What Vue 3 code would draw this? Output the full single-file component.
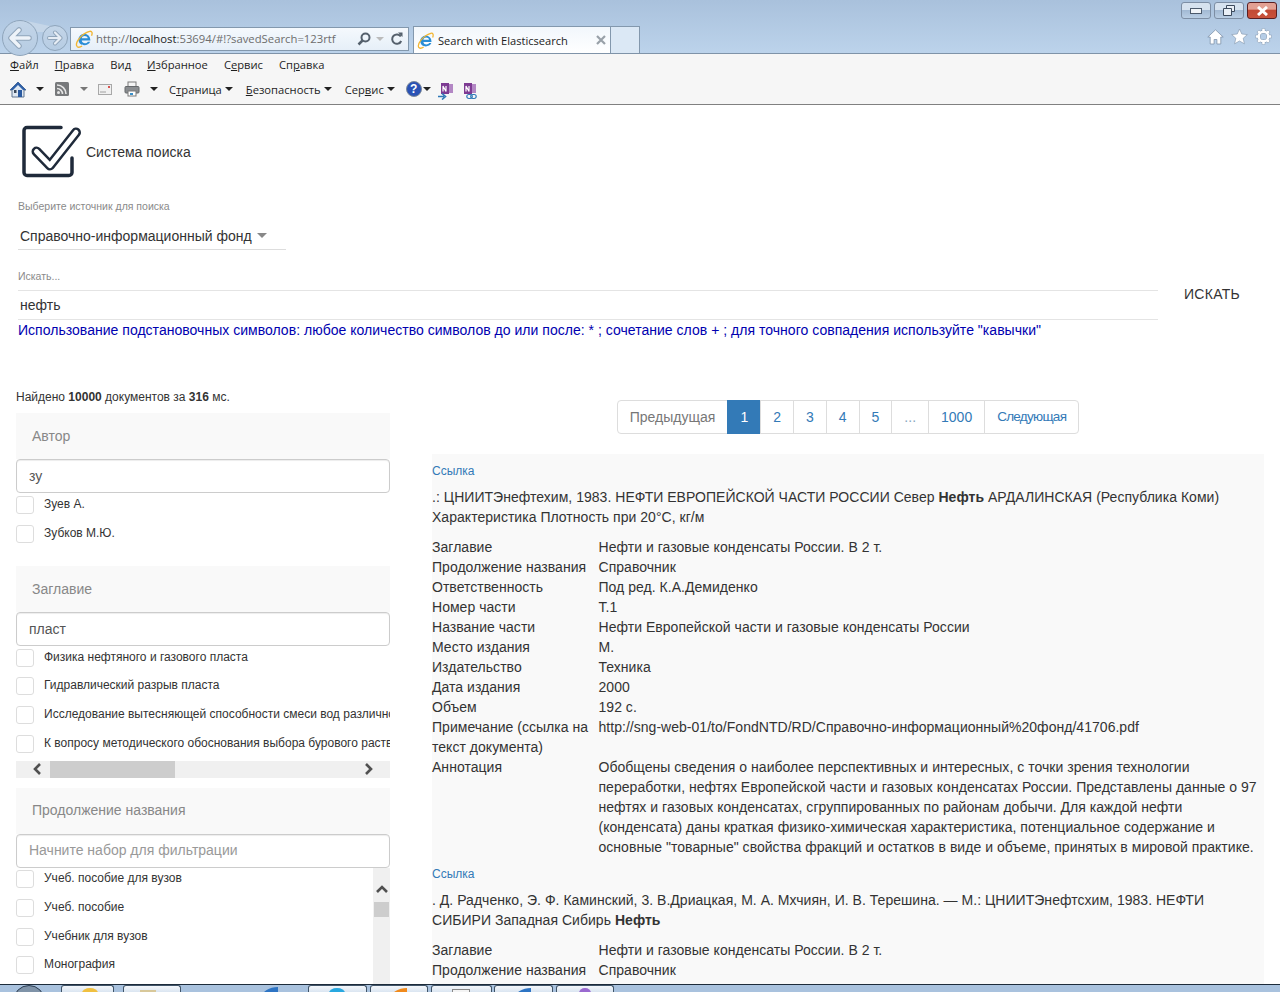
<template>
  <div class="screen">
    <svg class="defs" width="0" height="0">
      <defs>
        <symbol id="ie" viewBox="0 0 16 16">
          <path d="M3 8.7a5.3 5.3 0 1 1 10.600 0v.7H6c.3 2.800 4.200 3.100 5.400 1h2.100c-1.700 4.300-9.900 4.600-10.500-1.700zM6 7.300h5.300c-.2-2.700-5-2.700-5.300 0z" fill="#2b8ed6" fill-rule="evenodd"/>
          <path d="M1.800 14.600C-.5 11.500 6 3 13 1.200c2.300-.4 2.700 1.500 1.700 4M1.800 14.600c1 1 3 .6 4.500-.4" fill="none" stroke="#f2b632" stroke-width="1.200"/>
        </symbol>
        <symbol id="onenote" viewBox="0 0 14 14">
          <rect x="1" y="1" width="8" height="11" fill="#7d3a92"/>
          <rect x="9" y="2" width="4" height="9" fill="#b387c4"/>
          <path d="M3 9.500V4l3 5.500V4" fill="none" stroke="#fff" stroke-width="1.200"/>
        </symbol>
      </defs>
    </svg>

    <header class="chrome">
      <div class="caption">
        <div class="win-btn"><span class="win-min"></span></div>
        <div class="win-btn">
          <svg width="12" height="11" viewBox="0 0 12 11"><path d="M3.500 3V.5h8v6H9M.5 3.500h8v7h-8z" fill="#e9eff6" stroke="#3c4a5c"/></svg>
        </div>
        <div class="win-btn win-close">
          <svg width="13" height="10" viewBox="0 0 13 10"><path d="M2 1l9 8M11 1L2 9" stroke="#fff" stroke-width="3"/></svg>
        </div>
      </div>
      <div class="nav">
        <div class="round back">
          <svg width="24" height="22" viewBox="0 0 24 22">
            <path d="M11 3l-8 8 8 8M4 11h17" fill="none" stroke="#90a5ba" stroke-width="5.500" stroke-linejoin="round" stroke-linecap="round"/>
            <path d="M11 3l-8 8 8 8M4 11h17" fill="none" stroke="#eef3f9" stroke-width="3.500" stroke-linejoin="round" stroke-linecap="round"/>
          </svg>
        </div>
        <span class="tail"></span>
        <div class="round forward">
          <svg width="18" height="16" viewBox="0 0 18 16">
            <path d="M9 2.500L14.500 8 9 13.500M14 8H3" fill="none" stroke="#90a5ba" stroke-width="4" stroke-linejoin="round" stroke-linecap="round"/>
            <path d="M9 2.500L14.500 8 9 13.500M14 8H3" fill="none" stroke="#e6edf5" stroke-width="2.200" stroke-linejoin="round" stroke-linecap="round"/>
          </svg>
        </div>
        <div class="address">
          <svg class="ie-icon" width="18" height="18"><use href="#ie" /></svg>
          <span class="url"><span>http://</span><b>localhost</b><span>:53694/#!?savedSearch=123rtf</span></span>
          <svg class="addr-tool" width="14" height="14" viewBox="0 0 14 14"><circle cx="8.500" cy="5.500" r="4" fill="none" stroke="#55606c" stroke-width="2"/><path d="M5.500 8.500L1.500 12.500" stroke="#55606c" stroke-width="2.500"/></svg>
          <span class="arrow addr-arrow"></span>
          <svg class="addr-tool refresh" width="13" height="14" viewBox="0 0 13 14"><path d="M10.800 4.500A4.700 4.700 0 1 0 11.200 9" fill="none" stroke="#55606c" stroke-width="2"/><path d="M8 .5h4.500V5z" fill="#55606c"/></svg>
        </div>
        <div class="tab">
          <svg class="ie-icon" width="17" height="17"><use href="#ie" /></svg>
          <span class="tab-title">Search with Elasticsearch</span>
          <svg class="tab-close" width="10" height="10" viewBox="0 0 10 10"><path d="M1 1l8 8M9 1L1 9" stroke="#98a0a8" stroke-width="2.200"/></svg>
        </div>
        <div class="new-tab"></div>
        <div class="right-tools">
          <svg width="17" height="16" viewBox="0 0 17 16"><path d="M8.500.8L.8 8h2.400v7h3.900v-4.500h2.800V15h3.900V8h2.400z" fill="#fff" stroke="#7f93aa" stroke-width=".8"/></svg>
          <svg width="17" height="17" viewBox="0 0 17 16"><path d="M8.500.5l2.300 5 5.500.6-4.100 3.700 1.200 5.500-4.900-2.800-4.900 2.800 1.200-5.500L.7 6.100l5.500-.6z" fill="#fff" stroke="#7f93aa" stroke-width=".6"/></svg>
          <svg width="17" height="17" viewBox="0 0 16 16">
            <path d="M8 .5v3M8 12.500v3M.5 8h3M12.500 8h3M2.700 2.700l2.100 2.100M11.200 11.200l2.100 2.100M2.700 13.300l2.100-2.100M11.200 4.800l2.100-2.100" stroke="#7f93aa" stroke-width="3.200"/>
            <circle cx="8" cy="8" r="4.500" fill="none" stroke="#7f93aa" stroke-width="3.200"/>
            <circle cx="8" cy="8" r="4.500" fill="none" stroke="#fff" stroke-width="2.400"/>
            <path d="M8 .8v3M8 12.200v3M.8 8h3M12.200 8h3M2.900 2.900l2 2M11.100 11.100l2 2M2.900 13.100l2-2M11.100 4.900l2-2" stroke="#fff" stroke-width="2.400"/>
          </svg>
        </div>
      </div>
    </header>

    <div class="menus">
      <nav class="menubar">
        <span v-for="m in menu" :key="m[0] + m[1] + m[2]">{{ m[0] }}<u>{{ m[1] }}</u>{{ m[2] }}</span>
      </nav>
      <div class="toolbar">
        <svg class="t-home" width="18" height="17" viewBox="0 0 18 17">
          <path d="M9 1L1 9h2v7h12V9h2z" fill="#dfe8f2" stroke="#5f7590"/>
          <path d="M9 1L1 9h3l5-5 5 5h3z" fill="#2d5fa8"/>
          <rect x="9" y="9" width="4" height="7" fill="#2a5aa0"/>
          <rect x="5" y="9" width="2.500" height="3" fill="#3c4a5c"/>
        </svg>
        <span class="arrow dark a-home"></span>
        <svg class="t-rss" width="14" height="14" viewBox="0 0 14 14">
          <rect width="14" height="14" rx="1.500" fill="#77797b"/>
          <circle cx="3.500" cy="10.500" r="1.500" fill="#e6e6e6"/>
          <path d="M2 6.500a5.500 5.500 0 0 1 5.500 5.500M2 3a9 9 0 0 1 9 9" fill="none" stroke="#e6e6e6" stroke-width="1.600"/>
        </svg>
        <span class="arrow gray a-rss"></span>
        <svg class="t-mail" width="14" height="11" viewBox="0 0 14 11">
          <rect x=".5" y=".5" width="13" height="10" fill="#f0f0f0" stroke="#a8a8a8"/>
          <path d="M2 8h6" stroke="#a0a0a0"/>
          <rect x="10" y="2" width="2" height="2" fill="#d9534f"/>
        </svg>
        <svg class="t-print" width="16" height="16" viewBox="0 0 16 16">
          <rect x="4" y="1" width="8" height="5" fill="#f4f4f4" stroke="#7a7a7a"/>
          <rect x="1" y="5.500" width="14" height="6.500" rx="1" fill="#8a8d90" stroke="#65686b"/>
          <rect x="4" y="10" width="8" height="5" fill="#fff" stroke="#7a7a7a"/>
          <rect x="6" y="12" width="3" height="2" fill="#3a8fc8"/>
        </svg>
        <span class="arrow dark a-print"></span>
        <span class="t-text"><span>С<u>т</u>раница</span><span class="arrow dark"></span></span>
        <span class="t-text"><span><u>Б</u>езопасность</span><span class="arrow dark"></span></span>
        <span class="t-text"><span>Сер<u>в</u>ис</span><span class="arrow dark"></span></span>
        <span class="help">?</span>
        <span class="arrow dark a-help"></span>
        <span class="note">
          <svg width="14" height="14"><use href="#onenote" /></svg>
          <svg class="note-badge" width="10" height="7" viewBox="0 0 10 7"><path d="M0 3.500h6M4 .5l3.500 3-3.500 3" fill="none" stroke="#2f78b7" stroke-width="1.600"/></svg>
        </span>
        <span class="note note-2">
          <svg width="14" height="14"><use href="#onenote" /></svg>
          <svg class="note-badge" width="11" height="7" viewBox="0 0 11 7"><rect x=".8" y="1.500" width="5.500" height="4" rx="2" fill="none" stroke="#2f78b7" stroke-width="1.200"/><rect x="4.700" y="1.500" width="5.500" height="4" rx="2" fill="none" stroke="#2f78b7" stroke-width="1.200"/></svg>
        </span>
      </div>
    </div>

    <main class="page">
      <div class="brand">
        <svg width="62" height="54" viewBox="0 0 62 54">
          <path d="M39 3.500H5a3 3 0 0 0-3 3v42a3 3 0 0 0 3 3h42a3 3 0 0 0 3-3V34" fill="none" stroke="#1f2a3a" stroke-width="3.500" stroke-linecap="round"/>
          <path d="M14.500 27.500l13.500 14 26-33" fill="none" stroke="#1f2a3a" stroke-width="10" stroke-linecap="round" stroke-linejoin="round"/>
          <path d="M14.500 27.500l13.500 14 26-33" fill="none" stroke="#fff" stroke-width="5" stroke-linecap="round" stroke-linejoin="round"/>
        </svg>
        <span>Система поиска</span>
      </div>

      <div class="field-label">Выберите источник для поиска</div>
      <div class="source">Справочно-информационный фонд<span class="arrow source-arrow"></span></div>

      <div class="field-label search-label">Искать...</div>
      <div class="search-row">
        <div class="search-input">нефть</div>
        <div class="search-btn">ИСКАТЬ</div>
      </div>
      <div class="hint">Использование подстановочных символов: любое количество символов до или после: * ; сочетание слов + ; для точного совпадения используйте "кавычки"</div>

      <div class="columns">
        <aside class="facets">
          <div class="found">Найдено <b>10000</b> документов за <b>316</b> мс.</div>

          <section class="facet">
            <div class="facet-head">Автор</div>
            <div class="facet-input">зу</div>
            <div class="option" v-for="o in authors" :key="o"><i class="check"></i><span>{{ o }}</span></div>
          </section>

          <section class="facet facet-scroll">
            <div class="facet-head">Заглавие</div>
            <div class="facet-input">пласт</div>
            <div class="option" v-for="o in titles" :key="o"><i class="check"></i><span>{{ o }}</span></div>
            <div class="hscroll">
              <svg class="sb-left" width="10" height="12" viewBox="0 0 10 12"><path d="M8 1L3 6l5 5" fill="none" stroke="#505050" stroke-width="2.600"/></svg>
              <span class="hthumb"></span>
              <svg class="sb-right" width="10" height="12" viewBox="0 0 10 12"><path d="M2 1l5 5-5 5" fill="none" stroke="#505050" stroke-width="2.600"/></svg>
            </div>
          </section>

          <section class="facet facet-last">
            <div class="facet-head">Продолжение названия</div>
            <div class="facet-input placeholder">Начните набор для фильтрации</div>
            <div class="vlist">
              <div class="vitems">
                <div class="option" v-for="o in sequels" :key="o"><i class="check"></i><span>{{ o }}</span></div>
              </div>
              <div class="vscroll">
                <svg width="12" height="10" viewBox="0 0 12 10"><path d="M1 8l5-5 5 5" fill="none" stroke="#505050" stroke-width="2.600"/></svg>
                <span class="vthumb"></span>
              </div>
            </div>
          </section>
        </aside>

        <section class="results">
          <div class="pager">
            <span v-for="p in pages" :key="p" class="pg" :class="{ on: p === '1', off: p === 'Предыдущая', dots: p === '...', next: p === 'Следующая' }">{{ p }}</span>
          </div>
          <div class="list">
            <article class="record" v-for="(r, i) in records" :key="i">
              <a class="doc-link">Ссылка</a>
              <p class="snippet">{{ r.before }}<b>Нефть</b>{{ r.after }}</p>
              <div class="props">
                <template v-for="row in r.rows" :key="row[0]">
                  <div>{{ row[0] }}</div>
                  <div>{{ row[1] }}</div>
                </template>
              </div>
            </article>
          </div>
        </section>
      </div>
    </main>

    <footer class="taskbar">
      <span class="orb"></span>
      <span class="task t1"><i class="bit gold"></i></span>
      <span class="task t2"><i class="bit tan"></i></span>
      <i class="bit blue free"></i>
      <span class="task t3"><i class="bit cyan"></i></span>
      <span class="task t4"><i class="bit orange"></i></span>
      <span class="task t5"><i class="bit paper"></i></span>
      <span class="task t6"><i class="bit blue"></i></span>
      <span class="task t7"><i class="bit violet"></i></span>
    </footer>
  </div>
</template>

<script setup>
const menu = [
  ['', 'Ф', 'айл'],
  ['', 'П', 'равка'],
  ['Ви', 'д', ''],
  ['', 'И', 'збранное'],
  ['С', 'е', 'рвис'],
  ['Сп', 'р', 'авка']
]

const authors = ['Зуев А.', 'Зубков М.Ю.']
const titles = [
  'Физика нефтяного и газового пласта',
  'Гидравлический разрыв пласта',
  'Исследование вытесняющей способности смеси вод различного состава',
  'К вопросу методического обоснования выбора бурового раствора'
]
const sequels = ['Учеб. пособие для вузов', 'Учеб. пособие', 'Учебник для вузов', 'Монография']
const pages = ['Предыдущая', '1', '2', '3', '4', '5', '...', '1000', 'Следующая']

const records = [
  {
    before: '.: ЦНИИТЭнефтехим, 1983. НЕФТИ ЕВРОПЕЙСКОЙ ЧАСТИ РОССИИ Север ',
    after: ' АРДАЛИНСКАЯ (Республика Коми) Характеристика Плотность при 20°С, кг/м',
    rows: [
      ['Заглавие', 'Нефти и газовые конденсаты России. В 2 т.'],
      ['Продолжение названия', 'Справочник'],
      ['Ответственность', 'Под ред. К.А.Демиденко'],
      ['Номер части', 'Т.1'],
      ['Название части', 'Нефти Европейской части и газовые конденсаты России'],
      ['Место издания', 'М.'],
      ['Издательство', 'Техника'],
      ['Дата издания', '2000'],
      ['Объем', '192 с.'],
      ['Примечание (ссылка на текст документа)', 'http://sng-web-01/to/FondNTD/RD/Справочно-информационный%20фонд/41706.pdf'],
      ['Аннотация', 'Обобщены сведения о наиболее перспективных и интересных, с точки зрения технологии переработки, нефтях Европейской части и газовых конденсатах России. Представлены данные о 97 нефтях и газовых конденсатах, сгруппированных по районам добычи. Для каждой нефти (конденсата) даны краткая физико-химическая характеристика, потенциальное содержание и основные "товарные" свойства фракций и остатков в виде и объеме, принятых в мировой практике.']
    ]
  },
  {
    before: '. Д. Радченко, Э. Ф. Каминский, 3. В.Дриацкая, М. А. Мхчиян, И. В. Терешина. — М.: ЦНИИТЭнефтсхим, 1983. НЕФТИ СИБИРИ Западная Сибирь ',
    after: '',
    rows: [
      ['Заглавие', 'Нефти и газовые конденсаты России. В 2 т.'],
      ['Продолжение названия', 'Справочник']
    ]
  }
]
</script>

<style scoped>
.screen {
  width: 1280px;
  height: 992px;
  display: flex;
  flex-direction: column;
  overflow: hidden;
  background: #fff;
  color: #333;
  font-family: "Liberation Sans", Arial, sans-serif;
  font-size: 14px;
}
.defs {
  position: absolute;
}

/* browser frame */
.chrome {
  flex: none;
  height: 54px;
  box-sizing: border-box;
  border-bottom: 1px solid #7f93a8;
  background: linear-gradient(#a9c1dc, #bcd3eb);
  font-family: "Open Sans", sans-serif;
  font-size: 12px;
}
.caption {
  height: 26px;
  box-sizing: border-box;
  padding: 2px 3px 0 0;
  display: flex;
  justify-content: flex-end;
  gap: 3px;
}
.win-btn {
  width: 30px;
  height: 17px;
  box-sizing: border-box;
  border: 1px solid #7d8ea4;
  border-radius: 3px;
  display: flex;
  align-items: center;
  justify-content: center;
  background: linear-gradient(#d6e2ef 0 45%, #a3bad4 50%, #b9cee4);
}
.win-min {
  width: 10px;
  height: 4px;
  background: #f0f4f8;
  border: 1px solid #4c5a6c;
}
.win-close {
  border-color: #5a1f22;
  background: linear-gradient(#e2a093 0 40%, #c24a35 50%, #c9523c);
}
.nav {
  height: 27px;
  display: flex;
  align-items: flex-start;
  position: relative;
}
.round {
  flex: none;
  box-sizing: border-box;
  border-radius: 50%;
  border: 1px solid #8fa5bb;
  display: flex;
  align-items: center;
  justify-content: center;
  background: linear-gradient(#c3d5e8, #b6cce3);
  position: relative;
  z-index: 1;
}
.back {
  width: 36px;
  height: 36px;
  margin: -6px 0 0 2px;
}
.tail {
  position: absolute;
  left: 22px;
  top: -6px;
  width: 30px;
  height: 12px;
  background: #c5d6e8;
  clip-path: polygon(0 0, 100% 55%, 100% 100%, 0 100%);
}
.forward {
  width: 26px;
  height: 26px;
  margin: -1px 0 0 4px;
}
.address {
  width: 339px;
  height: 24px;
  margin: 1px 0 0 2px;
  box-sizing: border-box;
  border: 1px solid #8398ad;
  background: linear-gradient(#f5f9fd, #e6eff8);
  display: flex;
  align-items: center;
  padding-left: 4px;
  flex: none;
}
.ie-icon {
  flex: none;
}
.url {
  margin: -2px 0 0 3px;
  width: 261px;
  color: #6d6d6d;
  font-size: 11.3px;
  white-space: nowrap;
}
.url b {
  font-weight: 400;
  color: #1c1c1c;
}
.addr-tool {
  flex: none;
}
.addr-arrow {
  margin: 0 6px 0 5px;
  border-top-color: #777;
}
.tab {
  flex: none;
  width: 198px;
  height: 27px;
  margin-left: 4px;
  box-sizing: border-box;
  border: 1px solid #8398ad;
  border-bottom: 0;
  background: linear-gradient(#f2f7fc, #fff);
  display: flex;
  align-items: center;
  padding-left: 3px;
  position: relative;
  z-index: 1;
}
.tab-title {
  margin-left: 4px;
  color: #222;
  font-size: 11.1px;
  white-space: nowrap;
}
.tab-close {
  margin-left: auto;
  margin-right: 4px;
}
.new-tab {
  flex: none;
  width: 29px;
  height: 27px;
  box-sizing: border-box;
  border: 1px solid #8398ad;
  border-left: 0;
  border-bottom: 0;
  background: #dbe8f5;
}
.right-tools {
  margin-left: auto;
  padding: 2px 8px 0 0;
  display: flex;
  gap: 7px;
  align-items: center;
}

/* menu and command bars */
.menus {
  flex: none;
  height: 51px;
  box-sizing: border-box;
  background: #f6f6f6;
  border-bottom: 1px solid #808080;
  font-family: "Open Sans", sans-serif;
  font-size: 11.2px;
  color: #1e1e1e;
}
.menubar {
  height: 21px;
  padding-left: 10px;
  display: flex;
  align-items: center;
  gap: 16px;
}
.toolbar {
  height: 28px;
  display: flex;
  align-items: center;
  padding-left: 9px;
}
.arrow {
  display: inline-block;
  width: 0;
  height: 0;
  border-left: 4px solid transparent;
  border-right: 4px solid transparent;
  border-top: 4px solid #bbb;
  flex: none;
}
.arrow.dark {
  border-top-color: #222;
}
.arrow.gray {
  border-top-color: #777;
}
.a-home {
  margin: 0 0 0 9px;
}
.t-rss {
  margin-left: 11px;
}
.a-rss {
  margin-left: 11px;
}
.t-mail {
  margin-left: 10px;
}
.t-print {
  margin-left: 12px;
}
.a-print {
  margin-left: 10px;
}
.t-text {
  display: flex;
  align-items: center;
  gap: 3px;
  margin-left: 11px;
}
.t-text + .t-text {
  margin-left: 13px;
}
.help {
  width: 16px;
  height: 16px;
  margin-left: 11px;
  border-radius: 50%;
  border: 1px solid #7d8a9a;
  box-sizing: border-box;
  background: #2a52b5;
  color: #fff;
  font: 700 12px/14px "Liberation Sans", sans-serif;
  text-align: center;
}
.a-help {
  margin-left: 1px;
}
.note {
  position: relative;
  width: 14px;
  height: 14px;
  margin-left: 9px;
  display: block;
}
.note svg {
  display: block;
}
.note .note-badge {
  position: absolute;
  left: -2px;
  bottom: -4px;
}
.note-2 .note-badge {
  left: 3px;
}

/* page */
.page {
  flex: 1;
  min-height: 0;
  overflow: hidden;
  padding-top: 19px;
}
.brand {
  height: 54px;
  padding-left: 22px;
  display: flex;
  align-items: center;
}
.brand svg {
  flex: none;
}
.brand span {
  margin: 1px 0 0 2px;
}
.field-label {
  margin: 21px 0 0 18px;
  font-size: 10.5px;
  line-height: 14px;
  color: #8a8a8a;
}
.source {
  width: 268px;
  height: 26px;
  margin: 11px 0 0 18px;
  box-sizing: border-box;
  padding: 0 0 0 2px;
  border-bottom: 1px solid #ddd;
  line-height: 24px;
}
.source-arrow {
  margin: 0 0 3px 5px;
  vertical-align: middle;
  border-left-width: 5px;
  border-right-width: 5px;
  border-top-width: 5px;
  border-top-color: #888;
}
.search-label {
  margin-top: 19px;
}
.search-row {
  display: flex;
  margin: 7px 0 0 18px;
}
.search-input {
  width: 1140px;
  height: 30px;
  box-sizing: border-box;
  padding-left: 2px;
  border-top: 1px solid #e4e4e4;
  border-bottom: 1px solid #e4e4e4;
  line-height: 28px;
}
.search-btn {
  margin: -6px 0 0 26px;
  line-height: 20px;
  letter-spacing: .3px;
}
.hint {
  margin-left: 18px;
  line-height: 20px;
  color: #0000b0;
  white-space: nowrap;
  letter-spacing: .025px;
}
.columns {
  display: flex;
  gap: 42px;
  margin: 49px 0 0 16px;
}
.facets {
  flex: none;
  width: 374px;
}
.found {
  font-size: 12px;
  line-height: 16px;
  margin-bottom: 8px;
}
.facet {
  margin-bottom: 14px;
}
.facet-scroll {
  margin-bottom: 10px;
}
.facet-head {
  height: 46px;
  box-sizing: border-box;
  padding-left: 16px;
  line-height: 46px;
  background: #f9f9f9;
  color: #888;
}
.facet-input {
  height: 34px;
  box-sizing: border-box;
  padding: 0 12px;
  border: 1px solid #ccc;
  border-radius: 4px;
  box-shadow: inset 0 1px 1px rgba(0, 0, 0, .075);
  line-height: 32px;
  color: #555;
  margin-bottom: 1px;
}
.facet-scroll .facet-input {
  margin-bottom: .7px;
}
.facet-last .facet-head {
  line-height: 44px;
}
.facet-last .facet-input {
  line-height: 30px;
  color: #999;
  margin-bottom: 0;
}
.option {
  height: 29px;
  box-sizing: border-box;
  padding-top: 2px;
  display: flex;
  gap: 10px;
  font-size: 12px;
  line-height: 16px;
  white-space: nowrap;
  overflow: hidden;
}
.facet-scroll .option {
  height: 28.67px;
}
.facet-last .option {
  height: 28.8px;
}
.check {
  flex: none;
  width: 18px;
  height: 18px;
  box-sizing: border-box;
  border: 1px solid #ddd;
  border-radius: 3px;
  background: #fff;
}
.hscroll {
  height: 17px;
  margin-top: -.4px;
  background: #f0f0f0;
  display: flex;
  align-items: center;
}
.sb-left {
  margin-left: 16px;
}
.hthumb {
  width: 125px;
  height: 17px;
  margin-left: 8px;
  background: #cdcdcd;
}
.sb-right {
  margin-left: auto;
  margin-right: 16px;
}
.vlist {
  display: flex;
  height: 130px;
}
.vitems {
  width: 357px;
  overflow: hidden;
}
.vscroll {
  width: 17px;
  background: #f0f0f0;
  display: flex;
  flex-direction: column;
  align-items: center;
}
.vscroll svg {
  margin-top: 16px;
}
.vthumb {
  width: 15px;
  height: 15px;
  margin-top: 8px;
  background: #cdcdcd;
}
.results {
  width: 832px;
  flex: none;
  padding-top: 11px;
}
.pager {
  display: flex;
  justify-content: center;
  height: 34px;
  margin-bottom: 20px;
}
.pg {
  box-sizing: border-box;
  padding: 6px 12px;
  line-height: 20px;
  border: 1px solid #ddd;
  margin-left: -1px;
  color: #337ab7;
  background: #fff;
}
.pg:first-child {
  border-radius: 4px 0 0 4px;
  margin-left: 0;
}
.pg:last-child {
  border-radius: 0 4px 4px 0;
}
.pg.on {
  color: #fff;
  background: #337ab7;
  border-color: #337ab7;
}
.pg.off {
  color: #777;
}
.pg.dots {
  color: #8aa5c0;
}
.pg.next {
  font-size: 13.5px;
  letter-spacing: -.72px;
}
.list {
  background: #f9f9f9;
  padding-top: 8px;
  height: 560px;
  letter-spacing: .03px;
}
.record {
  padding-bottom: 8px;
}
.doc-link {
  display: block;
  margin-top: 1px;
  font-size: 12px;
  line-height: 16px;
  letter-spacing: 0;
  color: #337ab7;
}
.snippet {
  margin: 8px 0 10px;
  line-height: 20px;
}
.props {
  display: grid;
  grid-template-columns: 166.5px 1fr;
  line-height: 20px;
}

/* windows taskbar */
.taskbar {
  flex: none;
  height: 8px;
  box-sizing: border-box;
  border-top: 1px solid #1d2b3a;
  background: #a9c2de;
  display: flex;
  overflow: hidden;
}
.orb {
  width: 30px;
  height: 30px;
  margin-left: 13px;
  border-radius: 50%;
  border: 1px solid #2b3d52;
  background: #7f93a8;
  flex: none;
}
.task {
  height: 8px;
  flex: none;
  box-sizing: border-box;
  border-radius: 3px 3px 0 0;
  border: 1px solid #405468;
  border-bottom: 0;
  background: linear-gradient(#f4f7fb, #d6e2ef);
  position: relative;
}
.t1 { width: 53px; margin-left: 16px; }
.t2 { width: 58px; margin-left: 9px; }
.t3 { width: 59px; margin-left: 30px; }
.t4 { width: 58px; margin-left: 3px; }
.t5 { width: 61px; margin-left: 3px; }
.t6 { width: 59px; margin-left: 2px; }
.t7 { width: 58px; margin-left: 3px; }
.bit {
  position: absolute;
  left: 20px;
  top: 2px;
  width: 16px;
  height: 10px;
  border-radius: 50% 50% 0 0;
}
.gold { background: #f0c040; }
.tan { background: #d8c89a; left: 16px; border-radius: 0; top: 4px; }
.blue { background: #2d74c4; border-radius: 100% 0 0 0; }
.free { position: static; flex: none; margin: 2px 0 0 81px; }
.cyan { background: #28a8e0; }
.orange { background: #f08a1c; border-radius: 100% 0 0 0; }
.paper { background: #f4f4f4; border: 1px solid #888; border-radius: 0; top: 3px; }
.violet { background: #9a6ad0; left: 22px; width: 12px; }
</style>

<style>
html,
body {
  margin: 0;
  overflow: hidden;
}
</style>
